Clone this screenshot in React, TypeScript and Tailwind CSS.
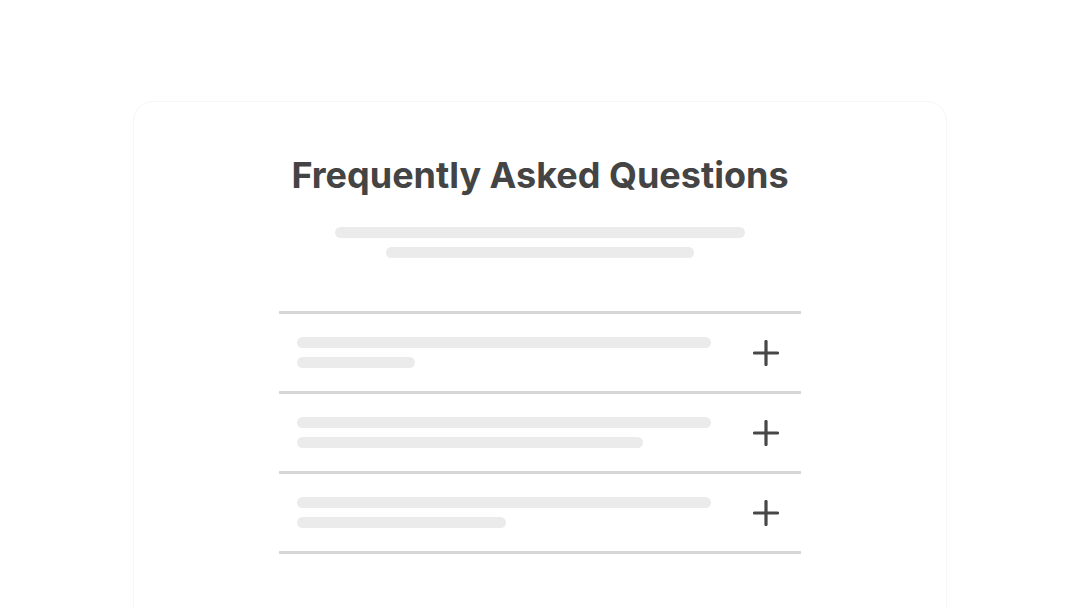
import React from 'react';

const rows = [
    { second: 'w-[118px]' },
    { second: 'w-[346px]' },
    { second: 'w-[209px]' },
];

const PlusIcon = () => (
    <svg width="26" height="26" viewBox="0 0 26 26" fill="none" stroke="#474747" strokeWidth="3.2" strokeLinecap="round">
        <path d="M13 1.5v23" />
        <path d="M1.5 13h23" />
    </svg>
);

const App = () => {
    return (
        <div className="h-screen overflow-hidden bg-white pt-[101px]" style={{ fontFamily: 'Inter, "Liberation Sans", sans-serif' }}>
            <div className="mx-auto w-[814px] h-[540px] rounded-[20px] border border-[#f6f6f6] bg-white pt-[53px]">
                {/* Heading */}
                <h1 className="text-center text-[36px] leading-[40px] font-bold text-[#444444]">
                    Frequently Asked Questions
                </h1>
                <div className="mt-[32px] flex flex-col items-center gap-[9px]">
                    <div className="h-[11px] w-[410px] rounded-full bg-[#ebebeb]" />
                    <div className="h-[11px] w-[308px] rounded-full bg-[#ebebeb]" />
                </div>

                {/* Accordion */}
                <div className="mx-auto mt-[53px] w-[522px] border-b-[3px] border-[#d6d6d6]">
                    {rows.map((row, i) => (
                        <div key={i} className="flex items-center justify-between border-t-[3px] border-[#d6d6d6] pl-[18px] pr-[22px] py-[23px]">
                            <div className="flex flex-col gap-[9px]">
                                <div className="h-[11px] w-[414px] rounded-full bg-[#ebebeb]" />
                                <div className={`h-[11px] ${row.second} rounded-full bg-[#ebebeb]`} />
                            </div>
                            <PlusIcon />
                        </div>
                    ))}
                </div>
            </div>
        </div>
    );
};

export default App;
